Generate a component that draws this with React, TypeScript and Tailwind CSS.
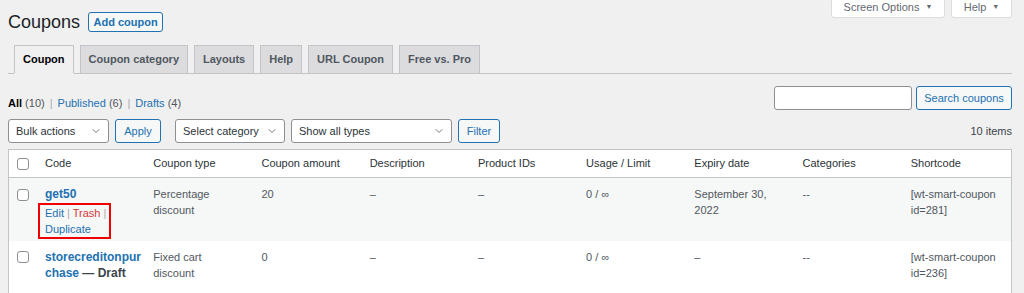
import { ChevronDown } from "lucide-react";

const FONT = { fontFamily: '"Liberation Sans", Arial, sans-serif' };

const TABS = ["Coupon", "Coupon category", "Layouts", "Help", "URL Coupon", "Free vs. Pro"];

const COLS = [
  "Code",
  "Coupon type",
  "Coupon amount",
  "Description",
  "Product IDs",
  "Usage / Limit",
  "Expiry date",
  "Categories",
  "Shortcode",
];

function Checkbox() {
  return <span className="block h-[12px] w-[12px] rounded-[3px] border border-[#8c8f94] bg-white" />;
}

function Select({ label, w }: { label: string; w: string }) {
  return (
    <div
      className={`flex h-[24px] items-center justify-between rounded-[3px] border border-[#8c8f94] bg-white pl-[7px] pr-[6px] text-[11px] text-[#2c3338] ${w}`}
    >
      <span>{label}</span>
      <ChevronDown size={12} strokeWidth={1.6} className="text-[#50575e]" />
    </div>
  );
}

function Btn({ label, w }: { label: string; w: string }) {
  return (
    <div
      className={`flex h-[24px] items-center justify-center rounded-[3px] border border-[#2271b1] bg-[#f6f7f7] text-[11px] text-[#2271b1] ${w}`}
    >
      {label}
    </div>
  );
}

function Row({
  striped,
  h,
  code,
  actions,
  cells,
}: {
  striped?: boolean;
  h: string;
  code: React.ReactNode;
  actions?: React.ReactNode;
  cells: string[][];
}) {
  return (
    <div
      className={`grid grid-cols-[28px_repeat(9,minmax(0,1fr))] ${h} ${striped ? "bg-[#f6f7f7]" : "bg-white"}`}
    >
      <div className={`flex justify-center ${striped ? "pt-[11px]" : "pt-[10px]"}`}>
        <Checkbox />
      </div>
      <div className="px-[8px] pt-[8px]">
        {code}
        {actions}
      </div>
      {cells.map((lines, i) => (
        <div key={i} className="px-[8px] pt-[8px] text-[11px] leading-[16px] text-[#50575e]">
          {lines.map((l, j) => (
            <div key={j}>{l}</div>
          ))}
        </div>
      ))}
    </div>
  );
}

export default function App() {
  return (
    <div className="h-[293px] overflow-hidden bg-[#f0f0f1] pl-[8px] pr-[12px]" style={FONT}>
      {/* header */}
      <div className="flex items-start justify-between">
        <div className="flex items-center gap-[8px] pt-[12px]">
          <h1 className="text-[18px] leading-[20px] text-[#1d2327]">Coupons</h1>
          <div className="flex h-[20px] w-[75px] items-center justify-center rounded-[3px] border border-[#2271b1] bg-[#f6f7f7] text-[11px] font-bold text-[#2271b1]">
            Add coupon
          </div>
        </div>
        <div className="-mt-[4px] flex gap-[6px]">
          <div className="flex h-[22px] w-[114px] items-center justify-center gap-[6px] rounded-b-[3px] border border-[#dcdcde] bg-white pt-[1px] text-[11px] text-[#646970]">
            Screen Options <span className="text-[7px]">▼</span>
          </div>
          <div className="flex h-[22px] w-[61px] items-center justify-center gap-[6px] rounded-b-[3px] border border-[#dcdcde] bg-white pt-[1px] text-[11px] text-[#646970]">
            Help <span className="text-[7px]">▼</span>
          </div>
        </div>
      </div>

      {/* tabs */}
      <div className="mt-[13px] flex gap-[6px] border-b border-[#c3c4c7] pl-[6px]">
        {TABS.map((t, i) => (
          <div
            key={t}
            className={`-mb-px flex h-[29px] items-center border border-[#c3c4c7] px-[8px] text-[11px] font-bold ${
              i === 0 ? "border-b-[#f0f0f1] bg-[#f0f0f1] text-[#000]" : "bg-[#dcdcde] text-[#50575e]"
            }`}
          >
            {t}
          </div>
        ))}
      </div>

      {/* status + search */}
      <div className="mt-[12px] flex items-start justify-between">
        <div className="pt-[9px] text-[11px] leading-[16px] text-[#50575e]">
          <span className="font-bold text-[#000]">All</span> (10)
          <span className="px-[5px] text-[#a7aaad]">|</span>
          <span className="text-[#2271b1]">Published</span> (6)
          <span className="px-[5px] text-[#a7aaad]">|</span>
          <span className="text-[#2271b1]">Drafts</span> (4)
        </div>
        <div className="flex gap-[4px]">
          <div className="h-[24px] w-[138px] rounded-[3px] border border-[#8c8f94] bg-white" />
          <Btn label="Search coupons" w="w-[96px]" />
        </div>
      </div>

      {/* filters */}
      <div className="mt-[8px] flex items-center">
        <Select label="Bulk actions" w="w-[101px]" />
        <div className="ml-[6px]">
          <Btn label="Apply" w="w-[46px]" />
        </div>
        <div className="ml-[14px]">
          <Select label="Select category" w="w-[110px]" />
        </div>
        <div className="ml-[6px]">
          <Select label="Show all types" w="w-[161px]" />
        </div>
        <div className="ml-[6px]">
          <Btn label="Filter" w="w-[42px]" />
        </div>
        <div className="ml-auto text-[11px] text-[#3c434a]">10 items</div>
      </div>

      {/* table */}
      <div className="mt-[6px] border border-[#c3c4c7] bg-white">
        <div className="grid h-[28px] grid-cols-[28px_repeat(9,minmax(0,1fr))] items-center border-b border-[#c3c4c7] text-[11px] text-[#2c3338]">
          <div className="flex justify-center">
            <Checkbox />
          </div>
          {COLS.map((c) => (
            <div key={c} className="px-[8px]">
              {c}
            </div>
          ))}
        </div>

        <Row
          striped
          h="h-[63px]"
          code={<div className="text-[12px] font-bold leading-[17px] text-[#2271b1]">get50</div>}
          actions={
            <div className="-ml-[7px] w-fit whitespace-nowrap border-2 border-[#f00000] pl-[5px] pr-[3px] text-[11px] leading-[16px] text-[#2271b1]">
              <div>
                Edit <span className="text-[#a7aaad]">|</span> <span className="text-[#d63638]">Trash</span>{" "}
                <span className="text-[#a7aaad]">|</span>
              </div>
              <div>Duplicate</div>
            </div>
          }
          cells={[
            ["Percentage", "discount"],
            ["20"],
            ["–"],
            ["–"],
            ["0 / ∞"],
            ["September 30,", "2022"],
            ["--"],
            ["[wt-smart-coupon", "id=281]"],
          ]}
        />
        <Row
          h="h-[60px]"
          code={
            <div className="text-[12px] font-bold leading-[16px] text-[#2271b1]">
              <div>storecreditonpur</div>
              <div>
                chase <span className="text-[#3c434a]">— Draft</span>
              </div>
            </div>
          }
          cells={[
            ["Fixed cart", "discount"],
            ["0"],
            ["–"],
            ["–"],
            ["0 / ∞"],
            ["–"],
            ["--"],
            ["[wt-smart-coupon", "id=236]"],
          ]}
        />
      </div>
    </div>
  );
}
